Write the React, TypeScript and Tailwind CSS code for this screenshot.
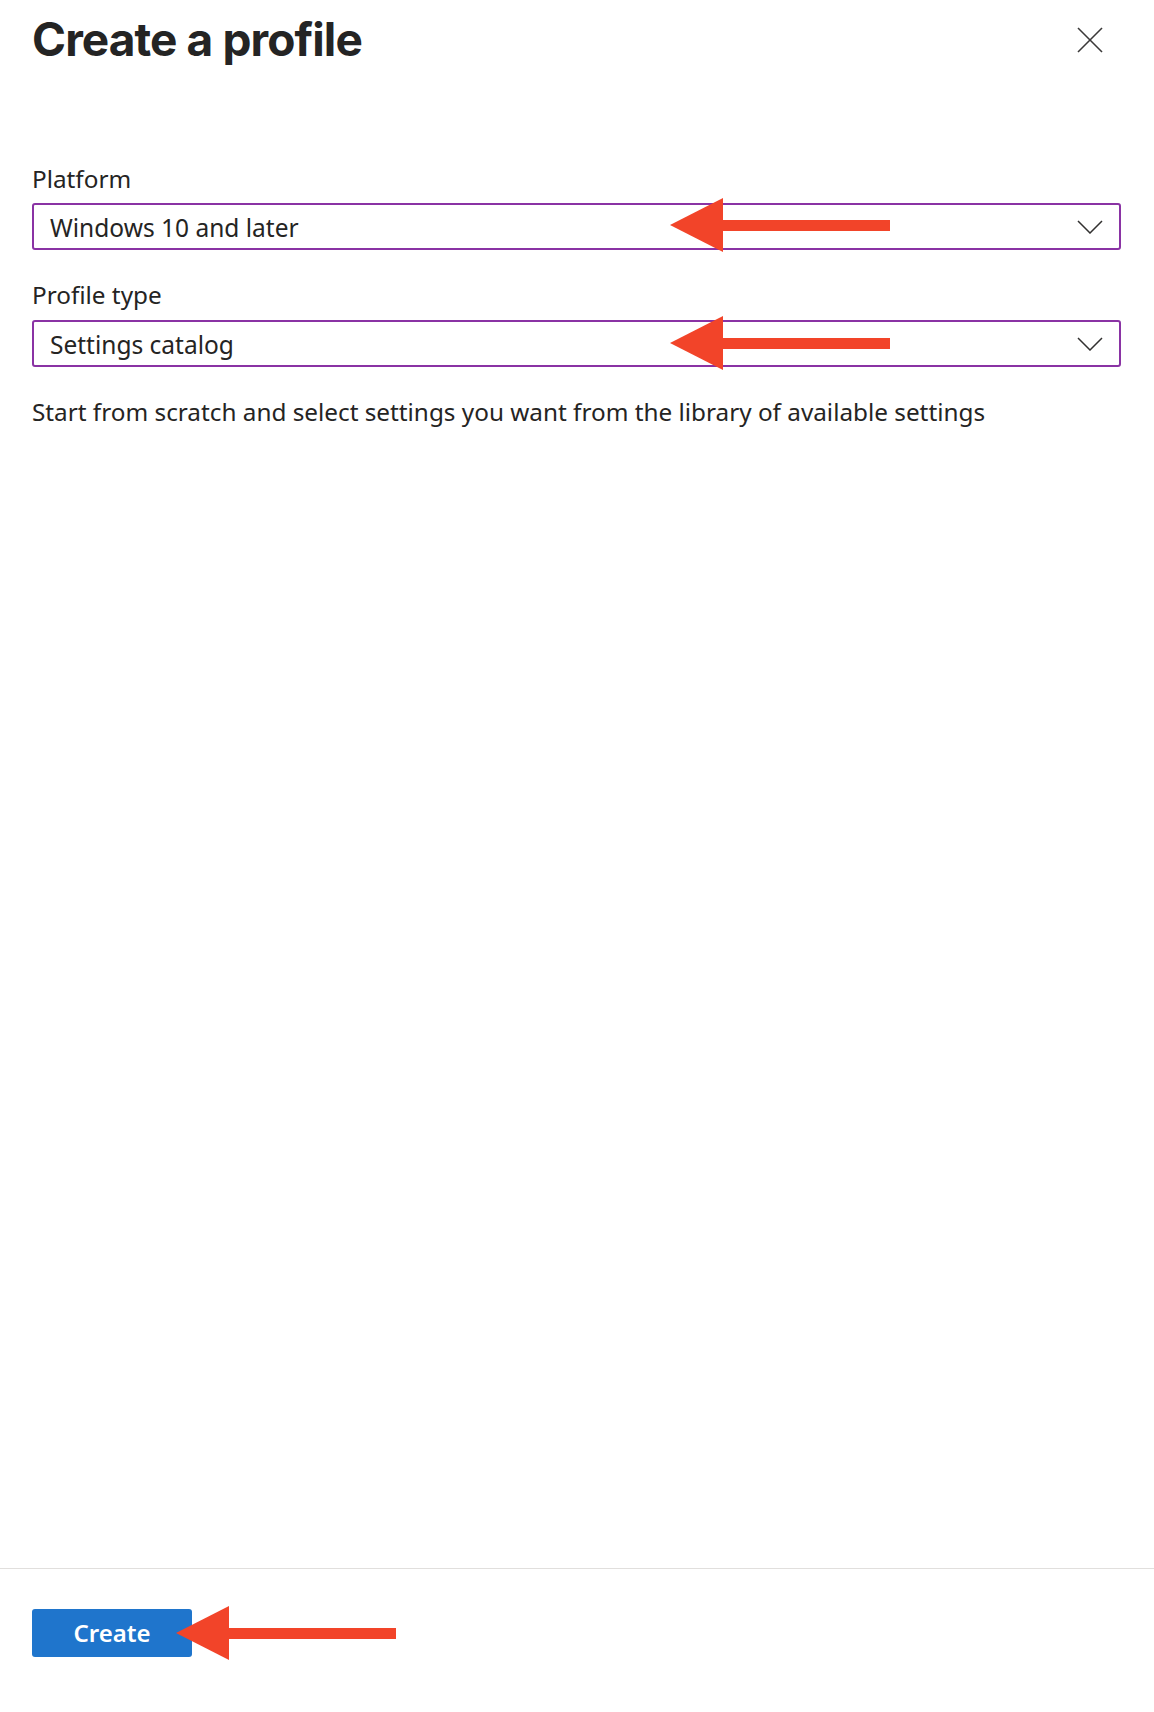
import React from "react";

const bodyFont = "font-['Noto_Sans','Open_Sans',sans-serif]";

// red callout arrow pointing left
function CalloutArrow() {
  return (
    <svg width="220" height="54" viewBox="0 0 220 54" className="block">
      <polygon points="0,27 53,0 53,54" fill="#f24429" />
      <rect x="52" y="22" width="168" height="11" fill="#f24429" />
    </svg>
  );
}

function Chevron() {
  return (
    <svg width="26" height="14" viewBox="0 0 26 14" className="block">
      <polyline points="1,1 13,13 25,1" fill="none" stroke="#323130" strokeWidth="1.5" />
    </svg>
  );
}

function Dropdown({ value, arrowTop }: { value: string; arrowTop: string }) {
  return (
    <div className="relative flex h-[47px] items-center justify-between rounded-[3px] border-2 border-[#8a33a4] pl-4 pr-4">
      <span className="pt-[2px] text-[24.5px] leading-[32px] text-[#252423]">{value}</span>
      <Chevron />
      <div className={`absolute left-[636px] ${arrowTop}`}>
        <CalloutArrow />
      </div>
    </div>
  );
}

export default function App() {
  return (
    <div className={`flex min-h-[1712px] w-full flex-col bg-white ${bodyFont}`}>
      <div className="flex-1 pl-8 pr-[33px]">
        {/* Header */}
        <div className="flex items-start justify-between pt-[16px]">
          <h1 className="font-['Inter',sans-serif] text-[46px] font-bold leading-[46px] tracking-[-0.9px] text-[#242424]">
            Create a profile
          </h1>
          <button aria-label="Close" className="mr-[18px] mt-[11px]">
            <svg width="26" height="26" viewBox="0 0 26 26" className="block">
              <line x1="1" y1="1" x2="25" y2="25" stroke="#3b3a39" strokeWidth="1.6" />
              <line x1="25" y1="1" x2="1" y2="25" stroke="#3b3a39" strokeWidth="1.6" />
            </svg>
          </button>
        </div>

        {/* Form */}
        <div className="mt-[101px] flex flex-col">
          <label className="text-[24.3px] leading-[32px] text-[#252423]">Platform</label>
          <div className="mt-2">
            <Dropdown value="Windows 10 and later" arrowTop="top-[-7px]" />
          </div>

          <label className="mt-[29px] text-[24.3px] leading-[32px] text-[#252423]">Profile type</label>
          <div className="mt-[9px]">
            <Dropdown value="Settings catalog" arrowTop="top-[-6px]" />
          </div>

          <p className="mt-[29px] text-[24.3px] leading-[32px] text-[#252423]">
            Start from scratch and select settings you want from the library of available settings
          </p>
        </div>
      </div>

      {/* Footer */}
      <div className="border-t border-[#e1dfdd] pb-[55px] pl-8 pt-10">
        <div className="relative w-fit">
          <button className="flex h-12 w-40 items-center justify-center rounded-[3px] bg-[#1f75cc] text-[24px] font-semibold text-white">
            Create
          </button>
          <div className="absolute left-[144px] top-[-3px]">
            <CalloutArrow />
          </div>
        </div>
      </div>
    </div>
  );
}
